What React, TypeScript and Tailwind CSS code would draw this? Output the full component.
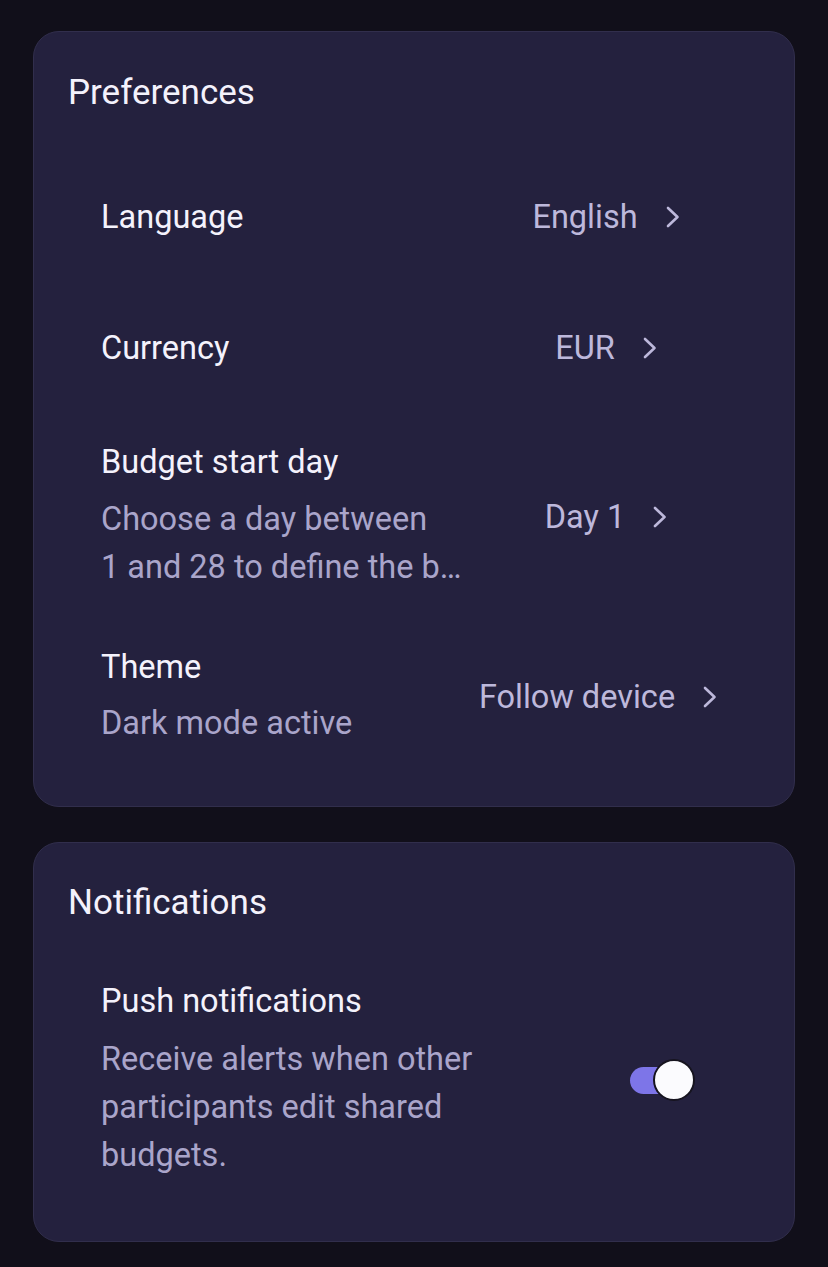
import React from "react";

const Chevron = () => (
  <svg width="14" height="22" viewBox="0 0 14 22" fill="none" className="shrink-0">
    <path d="M2 2 L11.5 11 L2 20" stroke="#bdb8db" strokeWidth="2.6" strokeLinecap="round" strokeLinejoin="round" />
  </svg>
);

function Value({ text, extra = "" }: { text: string; extra?: string }) {
  return (
    <div className={`w-[242px] shrink-0 flex items-center justify-center whitespace-nowrap ${extra}`}>
      <span className="text-[32.5px] leading-[40px] text-[#bdb8db]">{text}</span>
      <span className="ml-[28px] flex items-center">
        <Chevron />
      </span>
    </div>
  );
}

export default function App() {
  return (
    <div
      className="min-h-[1267px] w-full bg-[#110f1a] pt-[31px] pb-[27px] px-[33px] flex flex-col gap-[35px]"
      style={{ fontFamily: "Roboto, 'Noto Sans', sans-serif" }}
    >
      {/* Preferences card */}
      <div className="rounded-[26px] bg-[#24213e] border border-[#312e4c] pt-[40px] pb-[30px] px-[34px]">
        <div className="text-[35px] leading-[42px] text-[#f4f2fc]">Preferences</div>
        <div className="mt-[37px] px-[33px] flex flex-col">
          {/* Language */}
          <div className="h-[131px] flex items-center">
            <div className="flex-1 text-[32.5px] leading-[40px] text-[#f4f2fc]">Language</div>
            <Value text="English" />
          </div>
          {/* Currency */}
          <div className="h-[131px] flex items-center">
            <div className="flex-1 text-[32.5px] leading-[40px] text-[#f4f2fc]">Currency</div>
            <Value text="EUR" />
          </div>
          {/* Budget start day */}
          <div className="pt-[29px] pb-[28px] flex items-center">
            <div className="flex-1 min-w-0">
              <div className="text-[32.5px] leading-[40px] text-[#f4f2fc]">Budget start day</div>
              <div className="mt-[13px] text-[32.5px] leading-[48px] text-[#aaa5ca]">
                <div>Choose a day between</div>
                <div>1 and 28 to define the b…</div>
              </div>
            </div>
            <Value text="Day 1" />
          </div>
          {/* Theme */}
          <div className="pt-[28px] pb-[29px] flex items-center">
            <div className="flex-1 min-w-0">
              <div className="text-[32.5px] leading-[40px] text-[#f4f2fc]">Theme</div>
              <div className="mt-[12px] text-[32.5px] leading-[48px] text-[#aaa5ca]">Dark mode active</div>
            </div>
            <Value text="Follow device" extra="mr-[8px]" />
          </div>
        </div>
      </div>

      {/* Notifications card */}
      <div className="rounded-[26px] bg-[#24213e] border border-[#312e4c] pt-[39px] pb-[34px] px-[34px]">
        <div className="text-[35px] leading-[42px] text-[#f4f2fc]">Notifications</div>
        <div className="mt-[29px] px-[33px] pt-[28px] pb-[28px] flex items-center">
          <div className="flex-1 min-w-0">
            <div className="text-[32.5px] leading-[40px] text-[#f4f2fc]">Push notifications</div>
            <div className="mt-[14px] text-[32.5px] leading-[48px] text-[#aaa5ca]">
              <div>Receive alerts when other</div>
              <div>participants edit shared</div>
              <div>budgets.</div>
            </div>
          </div>
          <div className="shrink-0 mr-[32px] relative w-[65px] h-[42px] flex items-center">
            <div className="w-[56px] h-[27px] rounded-full bg-[#7d75e8]" />
            <div className="absolute right-0 top-0 w-[42px] h-[42px] rounded-full bg-[#fbfbfe] border-[2px] border-[#16141f]" />
          </div>
        </div>
      </div>
    </div>
  );
}
